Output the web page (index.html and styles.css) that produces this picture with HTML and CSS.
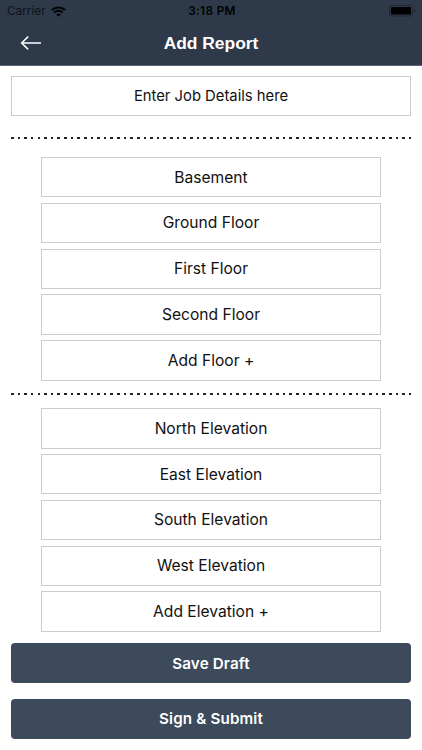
FILE: index.html
```html
<!DOCTYPE html>
<html lang="en">
<head>
    <meta charset="UTF-8">
    <meta name="viewport" content="width=device-width, initial-scale=1.0">
    <title>Add Report</title>
    <link rel="stylesheet" href="styles.css">
</head>
<body>
    <header class="header">
        <div class="status-bar">
            <div class="carrier">
                <span>Carrier</span>
                <svg class="wifi" width="15" height="11" viewBox="0 0 15 11">
                    <path d="M0.9 4.1C4.6 0.5 10.4 0.5 14.1 4.1" fill="none" stroke="#000" stroke-width="2"/>
                    <path d="M3.2 6.5C5.6 4.2 9.4 4.2 11.8 6.5" fill="none" stroke="#000" stroke-width="1.9"/>
                    <path d="M5.2 8.4C6.5 7.2 8.5 7.2 9.8 8.4L7.5 10.8Z"/>
                </svg>
            </div>
            <span class="time">3:18 PM</span>
            <svg class="battery" width="27" height="12" viewBox="0 0 27 12">
                <rect x="0.5" y="0.5" width="23" height="10.5" rx="2" fill="none" stroke="#1e2732"/>
                <rect x="2" y="2" width="20" height="7.5" rx="0.8"/>
                <path d="M25 4C26.8 4.5 26.8 7 25 7.5Z" fill="#1e2732"/>
            </svg>
        </div>
        <div class="nav">
            <svg class="back" width="22" height="16" viewBox="0 0 22 16">
                <path d="M8.2 1.6L1.6 8L8.2 14.4M1.6 8H21" fill="none" stroke="#fff" stroke-width="1.5"/>
            </svg>
            <h1 class="title">Add Report</h1>
        </div>
    </header>
    <main class="content">
        <button class="item job-details">Enter Job Details here</button>
        <div class="divider"></div>
        <div class="list floors">
            <button class="item">Basement</button>
            <button class="item">Ground Floor</button>
            <button class="item">First Floor</button>
            <button class="item">Second Floor</button>
            <button class="item">Add Floor +</button>
        </div>
        <div class="divider"></div>
        <div class="list elevations">
            <button class="item">North Elevation</button>
            <button class="item">East Elevation</button>
            <button class="item">South Elevation</button>
            <button class="item">West Elevation</button>
            <button class="item">Add Elevation +</button>
        </div>
        <div class="actions">
            <button class="action">Save Draft</button>
            <button class="action">Sign &amp; Submit</button>
        </div>
    </main>
</body>
</html>
```

FILE: styles.css
```css
body {
    margin: 0;
    height: 750px;
    overflow: hidden;
    background-color: #fff;
    font-family: Inter, sans-serif;
}
.header {
    box-sizing: border-box;
    height: 66px;
    background-color: #2e3a4a;
    border-bottom: 1px solid #5b6774;
}
.status-bar {
    display: grid;
    grid-template-columns: 1fr auto 1fr;
    align-items: center;
    height: 22px;
    padding: 0 6px 0 7px;
    font-size: 11.8px;
    line-height: 22px;
    color: #000;
}
.carrier {
    display: flex;
    align-items: center;
    gap: 5px;
    color: #101419;
}
.time {
    padding-left: 1px;
    font-weight: 600;
    letter-spacing: 0.35px;
}
.battery {
    justify-self: end;
}
.nav {
    display: grid;
    grid-template-columns: 1fr auto 1fr;
    align-items: center;
    height: 42px;
    padding: 0 20px;
}
.title {
    margin: 0;
    font-family: "Liberation Sans", Arial, sans-serif;
    font-size: 17.4px;
    color: #fff;
}
.content {
    padding: 10px 11px 0;
}
.item {
    display: block;
    box-sizing: border-box;
    width: 100%;
    height: 40.4px;
    padding: 0;
    border: 1px solid #ccc;
    background-color: #fff;
    font-family: inherit;
    font-size: 15.6px;
    color: #111;
}
.job-details {
    font-size: 14.8px;
}
.divider {
    height: 2px;
    margin-top: 20.6px;
    background: repeating-linear-gradient(90deg, #222 0, #222 2.6px, transparent 2.6px, transparent 6.63px);
}
.list {
    display: flex;
    flex-direction: column;
    gap: 5.4px;
    padding: 0 30px;
}
.floors {
    margin-top: 18px;
}
.floors + .divider {
    margin-top: 12.4px;
}
.elevations {
    margin-top: 13.3px;
}
.actions {
    display: flex;
    flex-direction: column;
    gap: 15.4px;
    margin-top: 11px;
}
.action {
    height: 40.6px;
    padding: 0;
    border: none;
    border-radius: 4px;
    background-color: #3c4a5b;
    font-family: inherit;
    font-size: 15.2px;
    font-weight: 600;
    letter-spacing: 0.15px;
    color: #fff;
}
```
